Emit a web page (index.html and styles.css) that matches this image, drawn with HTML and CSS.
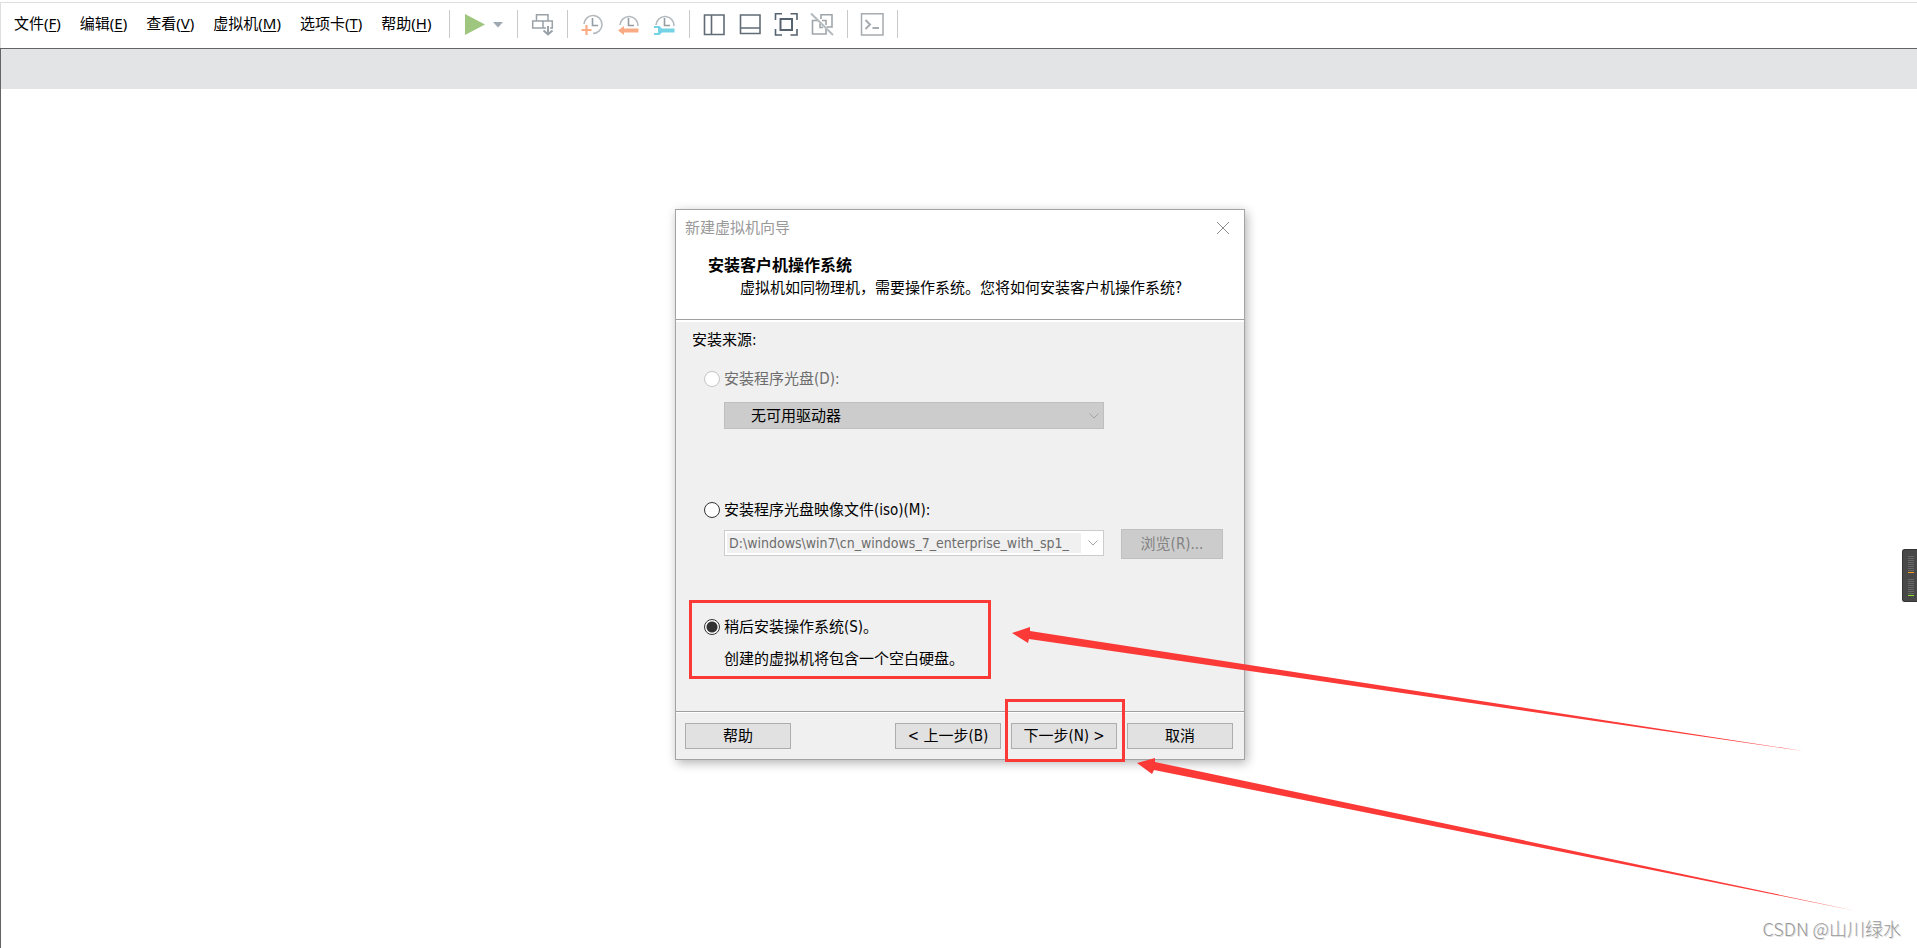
FILE: index.html
```html
<!DOCTYPE html>
<html lang="zh-CN">

<head>
    <meta charset="UTF-8">
    <meta name="viewport" content="width=device-width, initial-scale=1.0">
    <title>新建虚拟机向导</title>
    <link rel="stylesheet" href="styles.css">
</head>

<body>
    <header class="topbar">
        <nav class="menu">
            <button class="menu-item">文件(<u>F</u>)</button>
            <button class="menu-item">编辑(<u>E</u>)</button>
            <button class="menu-item">查看(<u>V</u>)</button>
            <button class="menu-item">虚拟机(<u>M</u>)</button>
            <button class="menu-item">选项卡(<u>T</u>)</button>
            <button class="menu-item">帮助(<u>H</u>)</button>
        </nav>
        <div class="group group-play">
            <button class="tool" aria-label="开机">
                <svg width="24" height="24" viewBox="0 0 24 24"><path d="M3 2 L23 12.500 L3 23 Z" fill="#9fc67f"/></svg>
            </button>
            <button class="tool" aria-label="电源选项">
                <svg width="12" height="24" viewBox="0 0 12 24"><path d="M1 10 H11 L6 15.500 Z" fill="#9fa8b1"/></svg>
            </button>
        </div>
        <div class="group">
            <button class="tool" aria-label="发送 Ctrl+Alt+Del">
                <svg width="24" height="24" viewBox="0 0 24 24" fill="none" stroke="#9aa1a7" stroke-width="1.500">
                    <path d="M6.500 9 V2.700 H18 V9 M16 16 H2.700 V9 H22.300 V16 H20 M13 9 V16"/>
                    <path d="M18 14 V22 M13.500 18.500 L18 22.500 L22.500 18.500" stroke-width="2"/>
                </svg>
            </button>
        </div>
        <div class="group">
            <button class="tool" aria-label="拍摄快照">
                <svg width="24" height="24" viewBox="0 0 24 24" fill="none">
                    <path d="M4 12 A9 9 0 1 1 13 21.500" stroke="#b3b9bd" stroke-width="1.600"/>
                    <path d="M12.500 6 V13.500 H18" stroke="#959da3" stroke-width="1.600"/>
                    <path d="M6.500 13 V23 M1.500 18 H11.500" stroke="#f9ab85" stroke-width="2.200"/>
                </svg>
            </button>
            <button class="tool" aria-label="恢复快照">
                <svg width="24" height="24" viewBox="0 0 24 24" fill="none">
                    <path d="M4 13 A9 9 0 1 1 22 14" stroke="#b3b9bd" stroke-width="1.600"/>
                    <path d="M12.500 6 V13.500 H18" stroke="#959da3" stroke-width="1.600"/>
                    <path d="M2 18.500 L8 14 V16.500 H22.500 V20.500 H8 V23 Z" fill="#f9ab85"/>
                </svg>
            </button>
            <button class="tool" aria-label="管理快照">
                <svg width="24" height="24" viewBox="0 0 24 24" fill="none">
                    <path d="M4 13 A9 9 0 1 1 22 14" stroke="#b3b9bd" stroke-width="1.600"/>
                    <path d="M12.500 6 V13.500 H18" stroke="#959da3" stroke-width="1.600"/>
                    <path d="M2 14 H7.500 L10 16.500 H22.500 V20.500 H10 L7.500 23 H2 V21 H6 V16 H2 Z" fill="#76d3e6"/>
                </svg>
            </button>
        </div>
        <div class="group">
            <button class="tool" aria-label="显示库">
                <svg width="24" height="24" viewBox="0 0 24 24" fill="none" stroke="#626c76" stroke-width="1.600"><path d="M2.500 3 H22 V22.500 H2.500 Z M9.500 3 V22.500"/></svg>
            </button>
            <button class="tool" aria-label="显示缩略图栏">
                <svg width="24" height="24" viewBox="0 0 24 24" fill="none" stroke="#626c76" stroke-width="1.600"><path d="M2.500 3 H22 V21.500 H2.500 Z M2.500 16 H22"/></svg>
            </button>
            <button class="tool" aria-label="全屏">
                <svg width="24" height="24" viewBox="0 0 24 24" fill="none" stroke="#56626d" stroke-width="1.600"><path d="M1.500 8 V1.700 H8 M16.500 1.700 H23 V8 M23 17 V23 H16.500 M8 23 H1.500 V17"/><path d="M6.500 7 H18 V18 H6.500 Z" stroke-width="2"/></svg>
            </button>
            <button class="tool" aria-label="Unity">
                <svg width="24" height="24" viewBox="0 0 24 24" fill="none" stroke="#9ea5aa" stroke-width="1.600"><path d="M11 7 V2.700 H22 V15 H16.500 M8 8.500 H2.500 V22 H16 V17 M12 8.500 H16 V13 M10 11.500 V15.500 H13"/><path d="M1 1.500 L23 23" stroke="#b4bbbf" stroke-width="2"/></svg>
            </button>
        </div>
        <div class="group group-last">
            <button class="tool" aria-label="控制台">
                <svg width="24" height="24" viewBox="0 0 24 24" fill="none" stroke="#a5abaf" stroke-width="1.500"><path d="M1.500 1.700 H23 V23 H1.500 Z"/><path d="M5.500 8 L10 12.500 L5.500 17 M12.500 16 H19" stroke-width="2"/></svg>
            </button>
        </div>
    </header>

    <main class="workspace">
        <div class="tabstrip"></div>
    </main>

    <section class="dialog" role="dialog" aria-labelledby="dialogTitle">
        <div class="dialog-head">
            <div class="titlebar">
                <span id="dialogTitle">新建虚拟机向导</span>
                <button class="close" aria-label="关闭">
                    <svg width="14" height="14" viewBox="0 0 14 14"><path d="M1 1 L13 13 M13 1 L1 13" stroke="#8c8c8c" fill="none"/></svg>
                </button>
            </div>
            <h1 class="heading">安装客户机操作系统</h1>
            <p class="subheading">虚拟机如同物理机，需要操作系统。您将如何安装客户机操作系统?</p>
        </div>

        <form class="dialog-body">
            <p class="source">安装来源:</p>

            <div class="option option-disc">
                <label class="choice choice-off"><input type="radio" name="source" class="radio" disabled>安装程序光盘(D):</label>
                <div class="row">
                    <div class="drive">
                        <select class="drive-select" aria-label="驱动器" disabled>
                            <option>无可用驱动器</option>
                        </select>
                        <svg class="chevron" width="10" height="6" viewBox="0 0 10 6"><path d="M0.500 0.500 L5 5 L9.500 0.500" stroke="#a3a3a3" fill="none"/></svg>
                    </div>
                </div>
            </div>

            <div class="option option-iso">
                <label class="choice"><input type="radio" name="source" class="radio">安装程序光盘映像文件(iso)(M):</label>
                <div class="row">
                    <div class="combo">
                        <input type="text" class="path" aria-label="映像文件" value="D:\windows\win7\cn_windows_7_enterprise_with_sp1_" disabled>
                        <button type="button" class="combo-arrow" aria-label="展开" disabled>
                            <svg width="10" height="6" viewBox="0 0 10 6"><path d="M0.500 0.500 L5 5 L9.500 0.500" stroke="#a3a3a3" fill="none"/></svg>
                        </button>
                    </div>
                    <button type="button" class="btn browse" disabled>浏览(R)...</button>
                </div>
            </div>

            <div class="option">
                <label class="choice"><input type="radio" name="source" class="radio" checked>稍后安装操作系统(S)。</label>
                <p class="note">创建的虚拟机将包含一个空白硬盘。</p>
            </div>
        </form>

        <footer class="dialog-foot">
            <button class="btn">帮助</button>
            <button class="btn push">&lt; 上一步(B)</button>
            <button class="btn">下一步(N) &gt;</button>
            <button class="btn">取消</button>
        </footer>

        <!-- red marks over the dialog -->
        <div class="mark mark-option"></div>
        <div class="mark mark-next"></div>
        <svg class="arrows" width="1190" height="710" viewBox="0 0 1190 710" fill="#fb3a38">
            <path d="M336 423 L354 417 L354 421 L1127 541 L353 429 L352 433 Z"/>
            <path d="M461 553 L479 548 L479 552 L1180 701 L478 560 L476 564 Z"/>
        </svg>
    </section>

    <!-- level meter docked to the right edge -->
    <aside class="meter">
        <div class="bars bars-orange"></div>
        <div class="bars bars-green"></div>
    </aside>

    <p class="watermark">CSDN @山川绿水</p>
</body>

</html>
```

FILE: styles.css
```css
* {
    box-sizing: border-box;
}

body {
    margin: 0;
    min-height: 100vh;
    display: flex;
    flex-direction: column;
    position: relative;
    overflow: hidden;
    background: #fff;
    color: #000;
    font: 15px/20px "Noto Sans", "Noto Sans CJK SC", sans-serif;
}

h1, p {
    margin: 0;
}

button, input, select {
    font: inherit;
    color: inherit;
}

/* menu and toolbar */
.topbar {
    display: flex;
    align-items: center;
    height: 46px;
    margin-top: 2px;
    padding: 0 0 3px 13px;
    border-top: 1px solid #dfdfdf;
    border-left: 1px solid #dfdfdf;
}

.menu {
    display: flex;
    gap: 19px;
    margin-right: 18px;
    padding-bottom: 2px;
}

.menu-item, .tool, .close, .combo-arrow {
    padding: 0;
    border: 0;
    background: none;
}

.menu-item {
    white-space: nowrap;
}

.menu-item u {
    text-underline-offset: 2px;
}

.tool, .close, .combo-arrow {
    display: flex;
}

.group {
    display: flex;
    align-items: center;
    gap: 12px;
    height: 28px;
    padding: 0 13px 0 12px;
    border-left: 1px solid #c8c8c8;
}

.group-play {
    gap: 6px;
}

.group-last {
    border-right: 1px solid #c8c8c8;
}

.workspace {
    flex: 1;
    border-top: 1px solid #636466;
    border-left: 1px solid #636466;
}

.tabstrip {
    height: 40px;
    background: #e3e4e6;
}

/* wizard window */
.dialog {
    position: absolute;
    left: 675px;
    top: 209px;
    width: 570px;
    border: 1px solid #a3a3a3;
    background: #f0f0f0;
    box-shadow: 2px 3px 10px rgba(0, 0, 0, .3);
    font-family: "DejaVu Sans Condensed", "Noto Sans CJK SC", sans-serif;
}

.dialog-head {
    height: 110px;
    background: #fff;
    border-bottom: 1px solid #a0a0a0;
}

.titlebar {
    display: flex;
    justify-content: space-between;
    align-items: center;
    height: 36px;
    padding: 0 14px 0 9px;
    color: #999;
}

.heading {
    margin: 10px 0 0 32px;
    font-size: 16px;
    line-height: 20px;
}

.subheading {
    margin: 2px 0 0 64px;
}

.dialog-body {
    height: 391px;
    padding: 8px 0 0 16px;
    border-top: 2px solid #fff;
}

.option {
    padding-left: 12px;
}

.option-disc {
    margin-top: 19px;
    height: 131px;
}

.option-iso {
    height: 117px;
}

.choice {
    display: flex;
    align-items: center;
    gap: 4px;
}

.choice-off {
    color: #6d6d6d;
}

.radio {
    appearance: none;
    width: 16px;
    height: 16px;
    margin: 0;
    border: 1px solid #333;
    border-radius: 50%;
    background: #fff;
}

.radio:checked {
    background: radial-gradient(circle, #333 5px, #fff 6px);
}

.radio:disabled {
    border-color: #c4c4c4;
}

.row {
    display: flex;
    align-items: flex-start;
    gap: 17px;
    margin-left: 20px;
}

.option-disc .row {
    margin-top: 13px;
}

.option-iso .row {
    margin-top: 9px;
}

.drive {
    display: flex;
    align-items: center;
    position: relative;
}

.drive-select {
    appearance: none;
    width: 380px;
    height: 27px;
    padding: 0 26px;
    border: 1px solid #bfbfbf;
    border-radius: 0;
    background: #ccc;
    color: #000;
    opacity: 1;
}

.chevron {
    position: absolute;
    right: 5px;
}

.combo {
    display: flex;
    align-items: center;
    width: 380px;
    height: 26px;
    margin-top: 1px;
    padding: 2px;
    border: 1px solid #ccc;
    background: #fff;
}

.path {
    width: 354px;
    height: 20px;
    padding: 0 0 0 2px;
    border: 0;
    background: #f0f0f0;
    color: #6d6d6d;
    font-size: 14px;
}

.combo-arrow {
    flex: 1;
    justify-content: flex-end;
    padding-right: 3px;
}

.note {
    margin: 12px 0 0 20px;
}

.btn {
    width: 106px;
    height: 26px;
    padding: 0;
    border: 1px solid #adadad;
    background: #e1e1e1;
    white-space: nowrap;
}

.browse {
    width: 102px;
    height: 30px;
    border-color: #bfbfbf;
    background: #ccc;
    color: #838383;
}

.dialog-foot {
    display: flex;
    align-items: center;
    gap: 10px;
    height: 48px;
    padding: 0 11px 0 9px;
    border-top: 1px solid #a0a0a0;
    box-shadow: inset 0 1px #fff;
}

.push {
    margin-left: auto;
}

.mark {
    position: absolute;
    border: 3px solid #fb3a38;
}

.mark-option {
    left: 13px;
    top: 390px;
    width: 302px;
    height: 79px;
}

.mark-next {
    left: 329px;
    top: 489px;
    width: 120px;
    height: 63px;
}

.arrows {
    position: absolute;
    left: 0;
    top: 0;
    pointer-events: none;
}

.meter {
    position: absolute;
    right: 0;
    top: 549px;
    display: flex;
    flex-direction: column;
    gap: 6px;
    width: 15px;
    padding: 6px 3px 5px 5px;
    border: 1px solid #333;
    border-right: 0;
    border-radius: 3px 0 0 3px;
    background: #484848;
}

.bars {
    height: 17px;
    background: repeating-linear-gradient(#686868 0 1px, #484848 1px 2px);
}

.bars-orange {
    border-bottom: 1px solid #f9a11b;
}

.bars-green {
    border-bottom: 1px solid #8ce32f;
}

.watermark {
    position: absolute;
    right: 16px;
    bottom: 8px;
    color: #999;
    font: 300 18px/24px "Noto Sans CJK SC", sans-serif;
    text-shadow: 1px 1px #ddd;
}
```
